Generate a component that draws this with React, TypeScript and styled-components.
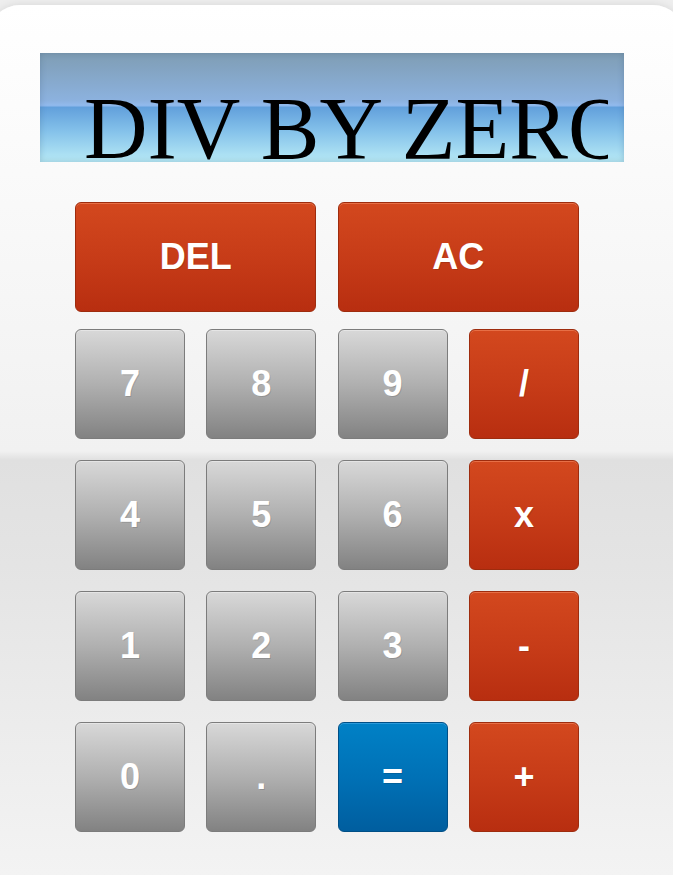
import React from "react";
import styled, { createGlobalStyle, css } from "styled-components";

const GlobalStyle = createGlobalStyle`
  html, body {
    margin: 0;
    padding: 0;
    background: #eeeeee;
    overflow: hidden;
  }
  * { box-sizing: border-box; }
`;

const Shell = styled.div`
  width: calc(100% + 24px);
  min-height: 900px;
  margin: 5px -12px 0;
  padding: 48px 0 0 52px;
  border-radius: 32px 32px 0 0;
  background: linear-gradient(
    to bottom,
    #ffffff 0px,
    #f9f9f9 200px,
    #f1f1f1 446px,
    #e0e0e0 455px,
    #e4e4e4 560px,
    #ececec 720px,
    #f3f3f3 870px
  );
  box-shadow: 0 0 8px rgba(0, 0, 0, 0.1);
`;

const Screen = styled.div`
  width: 584px;
  height: 109px;
  padding: 25px 16px 0 44px;
  overflow: hidden;
  background: linear-gradient(
    to bottom,
    #7f9db4 0%,
    #8cb2df 44%,
    #92baed 48%,
    #62a0dc 50%,
    #85c2ea 72%,
    #b8eaf6 100%
  );
  box-shadow: inset 0 0 6px rgba(40, 70, 100, 0.25);
`;

const Readout = styled.div`
  width: 100%;
  overflow: hidden;
  white-space: nowrap;
  font-family: "Liberation Serif", "Times New Roman", serif;
  font-size: 88px;
  line-height: normal;
  color: #000;
`;

const Keys = styled.div`
  margin: 40px 0 0 35px;
  width: 504px;
`;

const TopRow = styled.div`
  display: grid;
  grid-template-columns: 1fr 1fr;
  column-gap: 21.3px;
  height: 110px;
  margin-bottom: 17px;
`;

const Pad = styled.div`
  display: grid;
  grid-template-columns: repeat(4, 110px);
  grid-auto-rows: 110px;
  column-gap: 21.3px;
  row-gap: 21px;
`;

type Tone = "gray" | "red" | "blue";

const tones = {
  gray: css`
    background: linear-gradient(to bottom, #d8d8d8 0%, #b0b0b0 50%, #828282 100%);
    border-color: #7c7c7c;
    box-shadow: inset 0 1px 0 rgba(255, 255, 255, 0.35);
  `,
  red: css`
    background: linear-gradient(to bottom, #d3481e 0%, #c73c18 50%, #b82e10 100%);
    border-color: #9e2c0e;
    box-shadow: inset 0 1px 0 rgba(255, 160, 120, 0.45);
  `,
  blue: css`
    background: linear-gradient(to bottom, #0081c6 0%, #0071b6 50%, #005e9f 100%);
    border-color: #004f86;
    box-shadow: inset 0 1px 0 rgba(120, 200, 255, 0.35);
  `,
};

const Key = styled.button<{ $tone: Tone }>`
  display: flex;
  align-items: center;
  justify-content: center;
  width: 100%;
  height: 100%;
  padding: 0;
  border: 1px solid;
  border-radius: 6px;
  font-family: "Liberation Sans", Arial, sans-serif;
  font-weight: bold;
  font-size: 36px;
  color: #ffffff;
  text-shadow: 1px 1px 0 rgba(0, 0, 0, 0.12);
  cursor: pointer;
  ${({ $tone }) => tones[$tone]}
`;

const rows: [string, Tone][] = [
  ["7", "gray"], ["8", "gray"], ["9", "gray"], ["/", "red"],
  ["4", "gray"], ["5", "gray"], ["6", "gray"], ["x", "red"],
  ["1", "gray"], ["2", "gray"], ["3", "gray"], ["-", "red"],
  ["0", "gray"], [".", "gray"], ["=", "blue"], ["+", "red"],
];

export default function App() {
  return (
    <>
      <GlobalStyle />
      <Shell>
        <Screen>
          <Readout>DIV BY ZERO</Readout>
        </Screen>
        <Keys>
          <TopRow>
            <Key $tone="red">DEL</Key>
            <Key $tone="red">AC</Key>
          </TopRow>
          <Pad>
            {rows.map(([label, tone]) => (
              <Key key={label} $tone={tone}>
                {label}
              </Key>
            ))}
          </Pad>
        </Keys>
      </Shell>
    </>
  );
}
